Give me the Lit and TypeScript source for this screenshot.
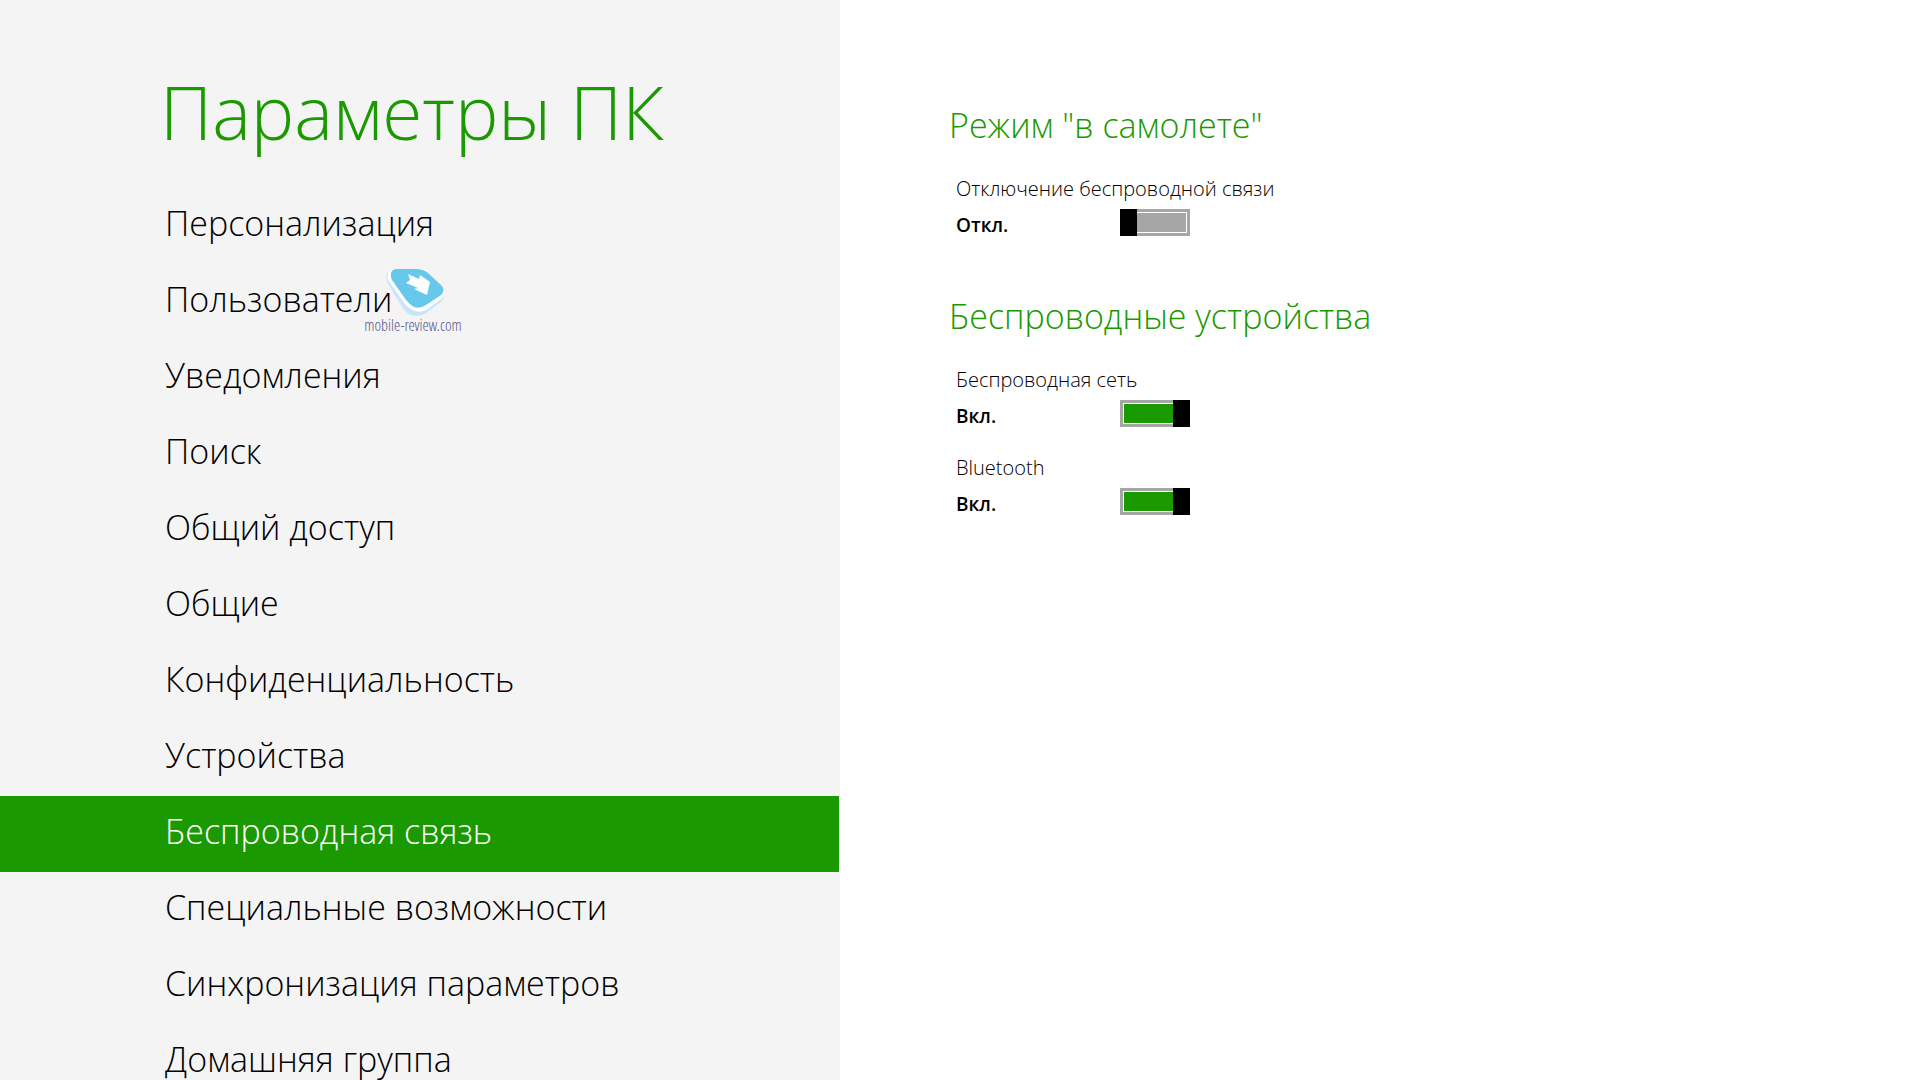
import { LitElement, html, css } from "lit";
import { customElement, property, state } from "lit/decorators.js";
import { classMap } from "lit/directives/class-map.js";

@customElement("toggle-row")
class ToggleRow extends LitElement {
  @property() label = "";
  @property({ type: Boolean }) checked = false;

  static styles = css`
    :host {
      display: block;
    }
    .label {
      display: block;
      font-size: 20px;
      line-height: 28px;
      font-weight: 300;
    }
    .line {
      display: flex;
      align-items: center;
      height: 28px;
      margin-top: 8px;
    }
    .state {
      width: 164px;
      font-size: 19px;
      line-height: 28px;
      font-weight: 600;
    }
    .switch {
      appearance: none;
      box-sizing: border-box;
      width: 70px;
      height: 27px;
      margin: 0 0 6px;
      border: 3px solid #a6a6a6;
      background: #a6a6a6;
      box-shadow: inset 0 0 0 1px #fff;
      position: relative;
    }
    .switch::before {
      content: "";
      position: absolute;
      top: -3px;
      bottom: -3px;
      left: -3px;
      width: 17px;
      background: #000;
    }
    .switch:checked {
      background: #1a9900;
    }
    .switch:checked::before {
      left: auto;
      right: -3px;
    }
  `;

  private onChange(e: Event) {
    this.checked = (e.target as HTMLInputElement).checked;
  }

  render() {
    return html`
      <label class="label" for="switch">${this.label}</label>
      <div class="line">
        <span class="state">${this.checked ? "Вкл." : "Откл."}</span>
        <input
          id="switch"
          class="switch"
          type="checkbox"
          role="switch"
          .checked=${this.checked}
          @change=${this.onChange}
        />
      </div>
    `;
  }
}

@customElement("site-mark")
class SiteMark extends LitElement {
  static styles = css`
    :host {
      display: flex;
      flex-direction: column;
      align-items: center;
      width: 104px;
      pointer-events: none;
    }
    .logo {
      display: block;
      width: 60px;
      height: 49px;
      margin-left: 6px;
    }
    .name {
      font-family: "Open Sans Condensed Light", "Open Sans Condensed", "Open Sans", sans-serif;
      font-size: 16px;
      line-height: 16px;
      font-weight: 300;
      color: #54568f;
      white-space: nowrap;
    }
  `;

  render() {
    return html`
      <svg class="logo" viewBox="0 0 60 49" aria-hidden="true">
        <path
          d="M1 5 Q0 10 1 14 L16 39 Q21 48 30 48 Q36 48 40 45 L55 34 Q59 30 58 25 L40 30 L10 5 Z"
          fill="#cbe5f8"
        />
        <path
          d="M2 6 Q3 1 10 1 L30 1 Q37 1 42 5 L55 17 Q60 22 58 27 Q57 30 54 32 L40 42 Q35 45 29 43 Q23 41 19 36 L2 12 Q1 9 2 6 Z"
          fill="#fff"
        />
        <path
          d="M5 5 Q6 1 11 1 L30 1 Q37 1 42 5 L55 17 Q60 22 55 27 L40 37 Q34 41 28 39 Q24 37 20 32 L6 12 Q4 8 5 5 Z"
          fill="#67c8ec"
        />
        <path
          d="M22 6 L33 11 L34 7 L44 14 L41 27 L28 21 L32 20 L20 15 L24 12 Z"
          fill="#fff"
        />
      </svg>
      <span class="name">mobile-review.com</span>
    `;
  }
}

@customElement("app-root")
class AppRoot extends LitElement {
  @state() private current = "Беспроводная связь";

  private items = [
    "Персонализация",
    "Пользователи",
    "Уведомления",
    "Поиск",
    "Общий доступ",
    "Общие",
    "Конфиденциальность",
    "Устройства",
    "Беспроводная связь",
    "Специальные возможности",
    "Синхронизация параметров",
    "Домашняя группа",
  ];

  static styles = css`
    :host {
      display: grid;
      grid-template-columns: 7fr 9fr;
      height: 100vh;
      overflow: hidden;
      background: #fff;
      color: #000;
      font-family: "Open Sans", "Noto Sans", sans-serif;
      font-weight: 300;
    }
    .sidebar {
      background: #f4f4f4;
      overflow: hidden;
    }
    .title {
      margin: 0;
      padding: 60px 0 24px 160px;
      font-size: 73px;
      line-height: 104px;
      font-weight: 300;
      color: #1a9900;
      white-space: nowrap;
    }
    .menu {
      list-style: none;
      margin: 0;
      padding: 0;
    }
    .item {
      position: relative;
    }
    .link {
      display: block;
      margin-right: 1px;
      padding-left: 165px;
      font-size: 34px;
      line-height: 70px;
      padding-bottom: 6px;
      color: inherit;
      text-decoration: none;
      white-space: nowrap;
    }
    .link.selected {
      background: #1a9900;
      color: #fff;
    }
    .mark {
      position: absolute;
      left: 361px;
      top: 4px;
    }
    .content {
      display: flex;
      flex-direction: column;
      gap: 53px;
      padding: 101px 0 0 109px;
    }
    .group {
      display: flex;
      flex-direction: column;
      gap: 24px;
    }
    .heading {
      margin: 0;
      padding-bottom: 2px;
      font-size: 34px;
      line-height: 48px;
      font-weight: 300;
      color: #1a9900;
    }
    .row {
      padding-left: 7px;
    }
  `;

  private select(e: Event, name: string) {
    e.preventDefault();
    this.current = name;
  }

  render() {
    return html`
      <nav class="sidebar">
        <h1 class="title">Параметры ПК</h1>
        <ul class="menu">
          ${this.items.map(
            (name, i) => html`
              <li class="item">
                <a
                  href="#"
                  class=${classMap({ link: true, selected: name === this.current })}
                  @click=${(e: Event) => this.select(e, name)}
                  >${name}</a
                >
                ${i === 1 ? html`<site-mark class="mark"></site-mark>` : ""}
              </li>
            `
          )}
        </ul>
      </nav>
      <main class="content">
        <section class="group">
          <h2 class="heading">Режим "в самолете"</h2>
          <toggle-row class="row" label="Отключение беспроводной связи"></toggle-row>
        </section>
        <section class="group">
          <h2 class="heading">Беспроводные устройства</h2>
          <toggle-row class="row" label="Беспроводная сеть" checked></toggle-row>
          <toggle-row class="row" label="Bluetooth" checked></toggle-row>
        </section>
      </main>
    `;
  }
}
